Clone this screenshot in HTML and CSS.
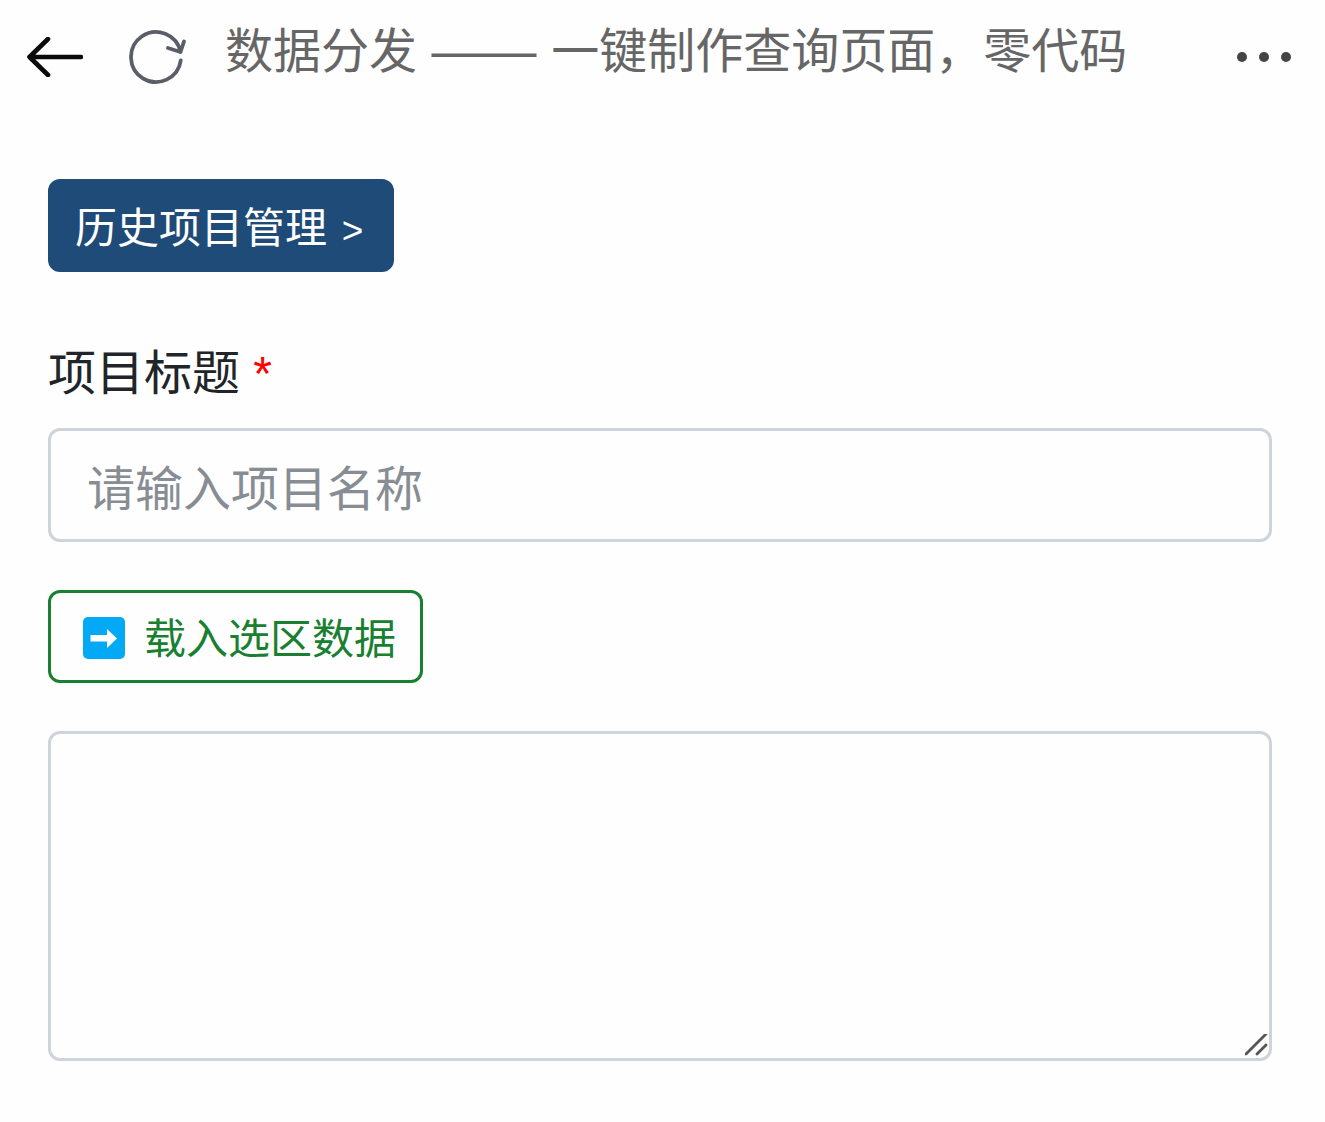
FILE: index.html
```html
<!DOCTYPE html>
<html lang="zh-CN">
<head>
<meta charset="utf-8">
<title>数据分发</title>
<link rel="stylesheet" href="styles.css">
</head>
<body>
<header class="topbar">
  <svg class="icon-back" viewBox="0 0 56 40" aria-hidden="true"><path d="M54 20H3M21 2 2.500 20 21 38"/></svg>
  <svg class="icon-reload" viewBox="0 0 60 60" aria-hidden="true"><path d="M54.750 33.500A25 25 0 1 1 54.500 25M42 21l12.500 4L58 14.500"/></svg>
  <h1 class="page-title">数据分发<span class="dash"> —— </span>一键制作查询页面，零代码</h1>
  <div class="more" aria-label="更多"><span></span><span></span><span></span></div>
</header>
<main class="content">
  <button class="btn btn-primary" type="button"><span>历史项目管理 <span class="chev">&gt;</span></span></button>
  <label class="field-label" for="title">项目标题 <span class="req">*</span></label>
  <input class="control" id="title" type="text" placeholder="请输入项目名称">
  <button class="btn btn-outline" type="button">
    <svg class="icon-arrow" viewBox="0 0 42 42" aria-hidden="true"><rect width="42" height="42" rx="5"/><path d="M7.500 18H24v-6l10 9.500L24 31v-6.500H7.500z"/></svg>
    <span>载入选区数据</span>
  </button>
  <div class="area-wrap">
    <textarea class="control area"></textarea>
    <svg class="grip" viewBox="0 0 24 24" aria-hidden="true"><path d="M1 20 21 0M12 20l9-9"/></svg>
  </div>
</main>
</body>
</html>
```
FILE: styles.css
```css
* { box-sizing: border-box; }
html, body { margin: 0; height: 100%; }
body {
  background: #fefefe;
  color: #212529;
  font-family: "Liberation Sans", "Noto Sans CJK SC", sans-serif;
}
.topbar {
  display: flex;
  align-items: center;
  height: 114px;
  padding: 0 34px 0 27px;
}
.icon-back {
  width: 56px;
  height: 40px;
  flex: none;
  fill: none;
  stroke: #0a0a0a;
  stroke-width: 4.600;
  stroke-linecap: round;
  stroke-linejoin: round;
}
.icon-reload {
  width: 60px;
  height: 60px;
  flex: none;
  margin-left: 43px;
  fill: none;
  stroke: #5a5e69;
  stroke-width: 3.800;
  stroke-linecap: round;
  stroke-linejoin: round;
}
.page-title {
  flex: 1;
  margin: -13px 0 0 39px;
  font-size: 48px;
  font-weight: 400;
  line-height: 72px;
  color: #666;
  white-space: nowrap;
}
.dash { font-size: 52.500px; white-space: pre; }
.more { display: flex; gap: 12px; }
.more span {
  width: 10px;
  height: 10px;
  border-radius: 50%;
  background: #444;
}
.content {
  display: flex;
  flex-direction: column;
  align-items: flex-start;
  padding: 65px 53px 0 48px;
}
.btn {
  display: inline-flex;
  align-items: center;
  padding: 15px 24px 9px;
  border: 3px solid transparent;
  border-radius: 12px;
  background: transparent;
  font: inherit;
  font-size: 42px;
  line-height: 63px;
}
.btn-primary {
  background: #1f4b79;
  border-color: #1f4b79;
  color: #fff;
}
.chev {
  display: inline-block;
  margin: 0 4px 0 3px;
  font-size: 37px;
  line-height: 1;
}
.btn-outline {
  margin-top: 48px;
  padding-left: 32px;
  border-color: #198031;
  color: #198031;
  gap: 19px;
}
.icon-arrow { width: 42px; height: 42px; flex: none; margin-bottom: 4px; }
.icon-arrow rect { fill: #03a9f4; }
.icon-arrow path { fill: #fff; }
.field-label {
  margin: 66px 0 18px;
  font-size: 48px;
  line-height: 72px;
}
.req { color: #f00; }
.control {
  display: block;
  width: 100%;
  height: 114px;
  padding: 22px 36px 14px;
  border: 3px solid #ced4da;
  border-radius: 12px;
  background: #fefefe;
  color: #212529;
  font: inherit;
  font-size: 48px;
  line-height: 72px;
  outline: none;
}
.control::placeholder { color: #878d93; opacity: 1; }
.area-wrap {
  position: relative;
  align-self: stretch;
  margin-top: 48px;
}
.area { height: 330px; resize: none; }
.grip {
  position: absolute;
  right: 3px;
  bottom: 3px;
  width: 24px;
  height: 24px;
  fill: none;
  stroke: #555;
  stroke-width: 2.800;
  stroke-linecap: round;
}
```
